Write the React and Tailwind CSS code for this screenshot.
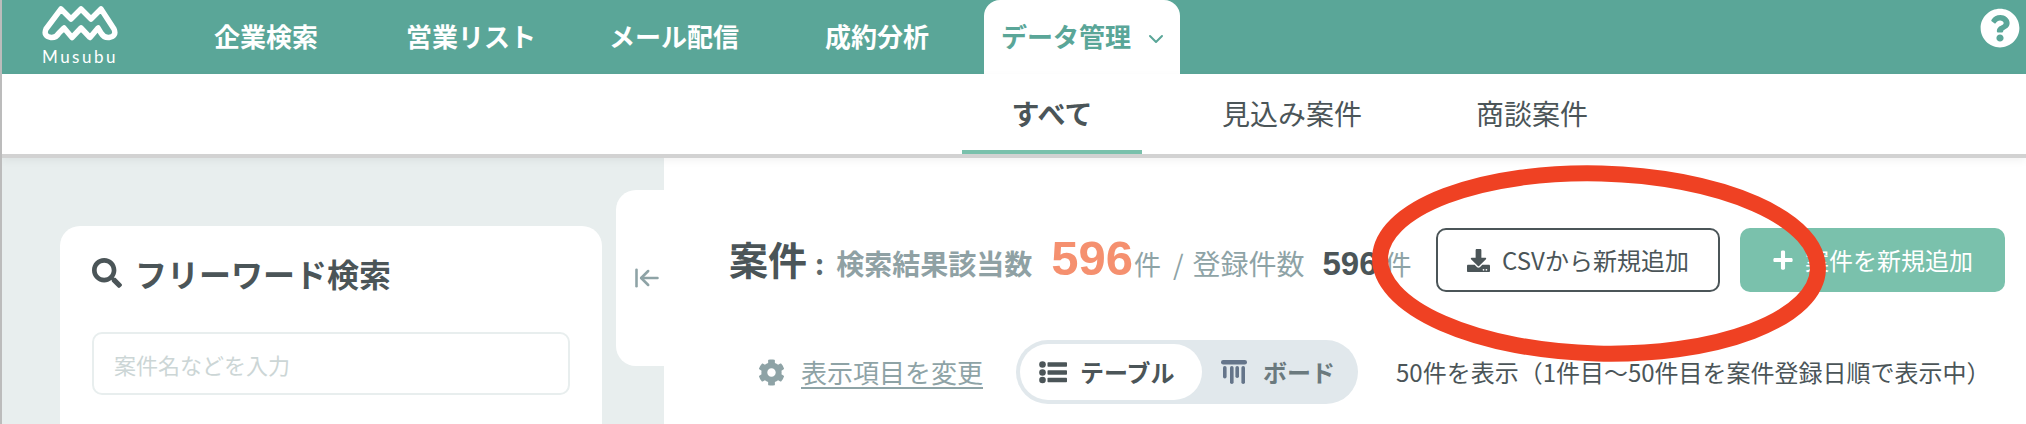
import React from "react";
import { FaSearch, FaCog, FaQuestionCircle, FaDownload, FaPlus } from "react-icons/fa";
import { ArrowLeftToLine, ChevronDown } from "lucide-react";

function Logo() {
  return (
    <svg width="76" height="38" viewBox="42 4 76 38" fill="none" stroke="white" strokeWidth="5.5" strokeLinejoin="round" strokeLinecap="round">
      <path d="M61 9 L71 19 L81 9 L91 19 L101 9 L114 29 Q117 36 109 37.5 Q104 38 101 33 L98 28 L90 37.5 L81 28 L72 37.5 L64 28 L59 33 Q56 38 51 37.5 Q43 36 46 29 Z" />
    </svg>
  );
}

function ListIcon() {
  return (
    <svg width="28" height="23" viewBox="0 0 28 23" fill="#4b5558">
      <circle cx="3.5" cy="3.5" r="3.3" />
      <circle cx="3.5" cy="11.5" r="3.3" />
      <circle cx="3.5" cy="19" r="3.3" />
      <rect x="8.5" y="1.2" width="19.5" height="4.6" rx="0.8" />
      <rect x="8.5" y="9.2" width="19.5" height="4.6" rx="0.8" />
      <rect x="8.5" y="16.7" width="19.5" height="4.6" rx="0.8" />
    </svg>
  );
}

function BoardIcon() {
  return (
    <svg width="28" height="25" viewBox="0 0 28 25" fill="#65758a">
      <rect x="1" y="0" width="26" height="4.5" rx="2.2" />
      <rect x="3" y="6" width="3.6" height="12.5" rx="1.8" />
      <rect x="10" y="6" width="3.6" height="18" rx="1.8" />
      <rect x="15.4" y="6" width="3.6" height="12" rx="1.8" />
      <rect x="21.4" y="6" width="3.6" height="18" rx="1.8" />
    </svg>
  );
}

export default function App() {
  return (
    <div className="relative w-[2026px] h-[424px] overflow-hidden bg-white border-l-2 border-[#bcbcbc] text-[#4b5558] font-['Noto_Sans_CJK_JP',sans-serif]">
      <header className="flex h-[74px] bg-[#5aa698] text-white">
        <div className="ml-[40px] w-[76px] pt-[4px] flex flex-col items-center">
          <Logo />
          <span className="mt-[5px] text-[17px] leading-[20px] tracking-[2.5px] font-['Lato',sans-serif]">Musubu</span>
        </div>
        <nav className="flex h-[74px] items-center text-[26px] font-bold leading-none">
          <span className="ml-[96px] pb-[2px]">企業検索</span>
          <span className="ml-[88px] pb-[2px]">営業リスト</span>
          <span className="ml-[73px] pb-[2px]">メール配信</span>
          <span className="ml-[86px] pb-[2px]">成約分析</span>
          <div className="ml-[55px] flex h-[74px] w-[196px] items-center rounded-t-[16px] bg-white pl-[17px] text-[#5aa698]">
            <span className="pb-[2px] whitespace-nowrap">データ管理</span>
            <ChevronDown className="ml-[13px] mt-[4px] w-[24px] h-[24px]" strokeWidth={2} />
          </div>
        </nav>
        <div className="ml-auto mr-[6px] pt-[8px]">
          <FaQuestionCircle className="w-[40px] h-[40px]" />
        </div>
      </header>

      <div className="relative z-10 flex h-[84px] border-b-4 border-[#d2d2d2] bg-white pl-[960px] gap-[60px] text-[28px] shadow-[0_3px_8px_rgba(0,0,0,0.05)]">
        <div className="flex w-[180px] items-center justify-center border-b-4 border-[#7ac1ac] h-[80px] font-bold pt-[2px]">すべて</div>
        <div className="flex w-[180px] items-center justify-center h-[80px] pb-[2px]">見込み案件</div>
        <div className="flex w-[180px] items-center justify-center h-[80px] pb-[2px]">商談案件</div>
      </div>

      <div className="flex h-[266px]">
        <aside className="flex w-[662px] shrink-0 items-start bg-[#e8eeee] pl-[58px]">
          <div className="mt-[68px] h-[300px] w-[542px] rounded-[20px] bg-white px-[32px] pt-[28px]">
            <div className="flex items-center h-[38px]">
              <FaSearch className="w-[30px] h-[30px]" />
              <span className="ml-[13px] text-[32px] font-bold leading-none">フリーワード検索</span>
            </div>
            <div className="mt-[40px] flex h-[63px] w-[478px] items-center rounded-[10px] border-2 border-[#e8eeee] pl-[20px] pt-[2px] text-[22px] text-[#ccd6d6]">
              案件名などを入力
            </div>
          </div>
          <div className="mt-[32px] ml-[14px] flex h-[176px] w-[48px] rounded-l-[20px] bg-white pl-[17px] pt-[74px] text-[#8ea3a6]">
            <ArrowLeftToLine className="w-[28px] h-[28px]" strokeWidth={2.2} />
          </div>
        </aside>

        <main className="flex-1 pt-[70px]">
          <div className="flex h-[64px] items-center">
            <div className="flex items-baseline pl-[65px] pb-[3px] whitespace-nowrap">
              <span className="text-[39px] font-bold leading-none">案件</span>
              <span className="ml-[8px] text-[28px] font-bold text-[#5d6a6d]">:</span>
              <span className="ml-[12px] text-[28px] font-bold text-[#8fa1a4] leading-none">検索結果該当数</span>
              <span className="ml-[19px] text-[49px] font-bold leading-none text-[#f5906f] font-['Liberation_Sans',sans-serif]">596</span>
              <span className="ml-[1px] text-[27px] text-[#8ea3a6] leading-none">件</span>
              <span className="ml-[12px] text-[27px] text-[#8ea3a6] leading-none">/</span>
              <span className="ml-[9px] text-[28px] text-[#8ea3a6] leading-none">登録件数</span>
              <span className="ml-[18px] text-[33px] font-bold leading-none font-['Liberation_Sans',sans-serif]">596</span>
              <span className="ml-[7px] text-[27px] text-[#8ea3a6] leading-none">件</span>
            </div>
            <div className="ml-auto flex gap-[20px] pr-[21px]">
              <button className="flex h-[64px] w-[284px] items-center justify-center rounded-[10px] border-2 border-[#4b5558] bg-white text-[24px] leading-none">
                <FaDownload className="w-[23px] h-[23px]" />
                <span className="ml-[12px]">CSVから新規追加</span>
              </button>
              <button className="flex h-[64px] w-[265px] items-center justify-center rounded-[10px] bg-[#7ac1ac] text-[24px] leading-none text-white">
                <FaPlus className="w-[22px] h-[22px]" />
                <span className="ml-[11px]">案件を新規追加</span>
              </button>
            </div>
          </div>

          <div className="mt-[48px] flex h-[64px] items-center pl-[94px] whitespace-nowrap">
            <FaCog className="w-[27px] h-[27px] text-[#8ea3a6]" />
            <a className="ml-[16px] text-[26px] leading-none text-[#8ea3a6] underline underline-offset-[4px]">表示項目を変更</a>
            <div className="ml-[33px] flex h-[64px] w-[342px] items-center rounded-full bg-[#e1e8ec] pl-[4px]">
              <div className="flex h-[56px] w-[182px] items-center rounded-full bg-white pl-[19px]">
                <ListIcon />
                <span className="ml-[13px] text-[24px] font-bold leading-none">テーブル</span>
              </div>
              <div className="ml-[18px] flex items-center">
                <BoardIcon />
                <span className="ml-[15px] text-[24px] font-bold leading-none text-[#6b7a7e]">ボード</span>
              </div>
            </div>
            <span className="ml-[38px] text-[24px] leading-none">50件を表示（1件目〜50件目を案件登録日順で表示中）</span>
          </div>
        </main>
      </div>

      <svg className="absolute left-[-2px] top-0 pointer-events-none z-20" width="2026" height="424" fill="none">
        <ellipse cx="1599" cy="263.5" rx="219" ry="90" stroke="#ef4123" strokeWidth="16" transform="rotate(1.5 1599 263.5)" />
      </svg>
    </div>
  );
}
